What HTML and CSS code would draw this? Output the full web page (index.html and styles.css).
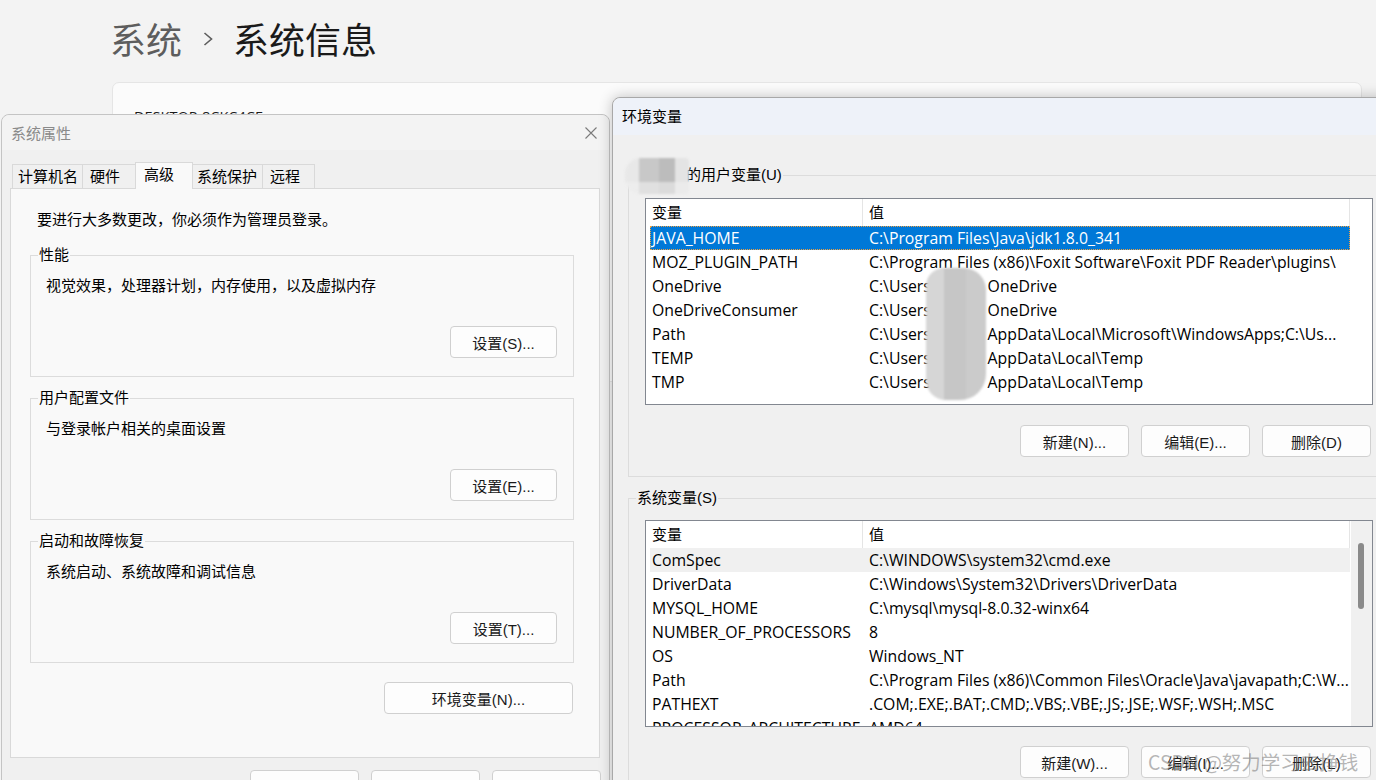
FILE: index.html
```html
<!DOCTYPE html>
<html lang="zh-CN">
<head>
<meta charset="utf-8">
<title>系统信息</title>
<link rel="stylesheet" href="styles.css">
</head>
<body>
<div class="settings">
  <h1 class="crumb"><span class="crumb-parent">系统</span><svg class="chev" viewBox="0 0 10 14" width="10" height="14"><polyline points="1.5,1 8.5,7 1.5,13" fill="none" stroke="#5d5d5d" stroke-width="1.6"/></svg><span class="crumb-current">系统信息</span></h1>
  <div class="card"><div class="device">DESKTOP-8CKC4CE</div></div>
</div>

<section class="dlg dlg-sys">
  <div class="sys-title">
    <span class="title">系统属性</span>
    <svg class="close" viewBox="0 0 12 12" width="12" height="12"><path d="M0.5 0.5 L11.5 11.5 M11.5 0.5 L0.5 11.5" stroke="#7a7a7a" stroke-width="1.1" fill="none"/></svg>
  </div>
  <div class="tabs">
    <div class="tab tab-a">计算机名</div>
    <div class="tab tab-b">硬件</div>
    <div class="tab tab-c on">高级</div>
    <div class="tab tab-d">系统保护</div>
    <div class="tab tab-e">远程</div>
  </div>
  <div class="panel">
    <p class="intro">要进行大多数更改，你必须作为管理员登录。</p>
    <div class="group">
      <div class="glabel">性能</div>
      <p class="gtext">视觉效果，处理器计划，内存使用，以及虚拟内存</p>
      <div class="gact"><button class="btn">设置(S)...</button></div>
    </div>
    <div class="group">
      <div class="glabel">用户配置文件</div>
      <p class="gtext">与登录帐户相关的桌面设置</p>
      <div class="gact"><button class="btn">设置(E)...</button></div>
    </div>
    <div class="group">
      <div class="glabel">启动和故障恢复</div>
      <p class="gtext">系统启动、系统故障和调试信息</p>
      <div class="gact"><button class="btn">设置(T)...</button></div>
    </div>
    <div class="envrow"><button class="btn btn-env">环境变量(N)...</button></div>
  </div>
  <div class="footer">
    <button class="btn btn-w">确定</button>
    <button class="btn btn-w">取消</button>
    <button class="btn btn-w">应用(A)</button>
  </div>
</section>

<section class="dlg dlg-env">
  <div class="env-title">环境变量</div>
  <div class="env-body">
    <div class="egroup">
      <div class="glabel elabel"><span class="namegap"></span>的用户变量(U)</div>
      <div class="lv">
        <div class="lv-main">
          <div class="lv-head"><div class="h1">变量</div><div class="h2">值</div><div class="hfill"></div></div>
          <div class="lv-rows">
            <div class="row sel"><div class="c1">JAVA_HOME</div><div class="c2">C:\Program Files\Java\jdk1.8.0_341</div></div>
            <div class="row"><div class="c1">MOZ_PLUGIN_PATH</div><div class="c2">C:\Program Files (x86)\Foxit Software\Foxit PDF Reader\plugins\</div></div>
            <div class="row"><div class="c1">OneDrive</div><div class="c2">C:\Users\<span class="nm"></span>OneDrive</div></div>
            <div class="row"><div class="c1">OneDriveConsumer</div><div class="c2">C:\Users\<span class="nm"></span>OneDrive</div></div>
            <div class="row"><div class="c1">Path</div><div class="c2">C:\Users\<span class="nm"></span>AppData\Local\Microsoft\WindowsApps;C:\Us...</div></div>
            <div class="row"><div class="c1">TEMP</div><div class="c2">C:\Users\<span class="nm"></span>AppData\Local\Temp</div></div>
            <div class="row"><div class="c1">TMP</div><div class="c2">C:\Users\<span class="nm"></span>AppData\Local\Temp</div></div>
          </div>
        </div>
      </div>
      <div class="ebtns">
        <button class="btn btn-e">新建(N)...</button>
        <button class="btn btn-e">编辑(E)...</button>
        <button class="btn btn-e">删除(D)</button>
      </div>
    </div>

    <div class="egroup egroup-sys">
      <div class="glabel elabel">系统变量(S)</div>
      <div class="lv lv-sys">
        <div class="lv-main">
          <div class="lv-head"><div class="h1">变量</div><div class="h2">值</div><div class="hfill"></div></div>
          <div class="lv-rows">
            <div class="row hov"><div class="c1">ComSpec</div><div class="c2">C:\WINDOWS\system32\cmd.exe</div></div>
            <div class="row"><div class="c1">DriverData</div><div class="c2">C:\Windows\System32\Drivers\DriverData</div></div>
            <div class="row"><div class="c1">MYSQL_HOME</div><div class="c2">C:\mysql\mysql-8.0.32-winx64</div></div>
            <div class="row"><div class="c1">NUMBER_OF_PROCESSORS</div><div class="c2">8</div></div>
            <div class="row"><div class="c1">OS</div><div class="c2">Windows_NT</div></div>
            <div class="row"><div class="c1">Path</div><div class="c2">C:\Program Files (x86)\Common Files\Oracle\Java\javapath;C:\W...</div></div>
            <div class="row"><div class="c1">PATHEXT</div><div class="c2">.COM;.EXE;.BAT;.CMD;.VBS;.VBE;.JS;.JSE;.WSF;.WSH;.MSC</div></div>
            <div class="row"><div class="c1">PROCESSOR_ARCHITECTURE</div><div class="c2">AMD64</div></div>
          </div>
        </div>
        <div class="vscroll"><div class="thumb"></div></div>
      </div>
      <div class="ebtns">
        <button class="btn btn-e">新建(W)...</button>
        <button class="btn btn-e">编辑(I)...</button>
        <button class="btn btn-e">删除(L)</button>
      </div>
    </div>
  </div>
  <div class="blur blur-name"></div>
  <div class="blur blur-path"></div>
</section>

<div class="wm">CSDN @努力学习去挣钱</div>
</body>
</html>
```

FILE: styles.css
```css
* { box-sizing: border-box; }
html, body { margin: 0; }
body {
  width: 1376px;
  height: 780px;
  overflow: hidden;
  position: relative;
  background: #f3f3f3;
  font-family: "Liberation Sans", "Noto Sans CJK SC", sans-serif;
  color: #1a1a1a;
}

/* settings page behind */
.settings { padding: 14px 0 0 110px; }
.crumb {
  margin: 0;
  display: flex;
  align-items: center;
  height: 48px;
  font-family: "Noto Sans CJK SC", sans-serif;
  font-weight: 400;
  font-size: 36px;
  line-height: 48px;
}
.crumb-parent { color: #5d5d5d; }
.crumb-current { color: #1a1a1a; }
.chev { margin: 2px 20px 0 21px; }
.card {
  margin: 20px 0 0 2px;
  width: 1250px;
  height: 300px;
  background: #fbfbfb;
  border: 1px solid #e5e5e5;
  border-radius: 7px;
  padding: 24px 0 0 21px;
}
.device { font-family: "Open Sans", sans-serif; font-size: 14.5px; line-height: 20px; color: #1a1a1a; }

/* dialogs */
.dlg {
  position: absolute;
  border: 1px solid #c4c4c4;
  border-radius: 8px;
  background: #f0f0f0;
}
.dlg-sys { left: 1px; top: 114px; width: 609px; height: 700px; }
.sys-title {
  height: 35px;
  display: flex;
  align-items: center;
  justify-content: space-between;
  padding: 0 12px 0 9px;
  background: #f3f3f3;
  border-radius: 8px 8px 0 0;
}
.sys-title .title { font-size: 15px; color: #8a8a8a; }

.tabs {
  display: flex;
  align-items: flex-end;
  height: 26px;
  margin: 12px 0 0 10px;
}
.tab {
  height: 24px;
  border: 1px solid #d9d9d9;
  border-bottom: 0;
  margin-right: -1px;
  background: #f0f0f0;
  font-size: 15px;
  line-height: 23px;
  padding-left: 6px;
  color: #000;
  white-space: nowrap;
}
.tab.on {
  height: 27px;
  margin-bottom: -1px;
  background: #f9f9f9;
  position: relative;
  z-index: 1;
  line-height: 24px;
  padding-left: 8px;
}
.tab-a { width: 71px; padding-left: 5px; }
.tab-b { width: 54px; padding-left: 7px; }
.tab-c { width: 58px; }
.tab-d { width: 71px; padding-left: 4px; }
.tab-e { width: 53px; padding-left: 7px; }

.panel {
  margin-left: 8px;
  width: 590px;
  height: 570px;
  border: 1px solid #d9d9d9;
  background: #f9f9f9;
  padding: 21px 25px 0 19px;
}
.intro { margin: 0 0 0 7px; font-size: 15px; line-height: 20px; color: #000; }
.group {
  border: 1px solid #dcdcdc;
  margin-top: 21px;
  padding: 0 16px 18px 0;
}
.intro + .group { margin-top: 25px; }
.glabel {
  display: table;
  margin: -11px 0 0 7px;
  padding: 0 1px;
  background: #f9f9f9;
  font-size: 15px;
  line-height: 20px;
  color: #000;
}
.gtext { margin: 11px 0 0 15px; font-size: 15px; line-height: 20px; color: #000; }
.gact { display: flex; justify-content: flex-end; margin-top: 30px; }

.btn {
  height: 32px;
  width: 107px;
  border: 1px solid #d0d0d0;
  border-radius: 4px;
  background: #fdfdfd;
  font-family: "Liberation Sans", "Noto Sans CJK SC", sans-serif;
  font-size: 15px;
  color: #1a1a1a;
  padding: 0;
}
.envrow { display: flex; justify-content: flex-end; margin-top: 19px; padding-right: 1px; }
.btn-env { width: 189px; }
.footer {
  display: flex;
  justify-content: flex-end;
  gap: 12px;
  margin-top: 12px;
  padding-right: 8px;
}
.btn-w { width: 109px; }

/* env dialog */
.dlg-env {
  left: 612px;
  top: 97px;
  width: 790px;
  height: 720px;
  border-color: #a8a8a8;
  box-shadow: 0 0 14px rgba(0, 0, 0, 0.24);
}
.env-title {
  height: 37px;
  background: #eef2f9;
  padding: 0 0 3px 9px;
  display: flex;
  align-items: center;
  font-size: 15px;
  color: #000;
  border-radius: 8px 8px 0 0;
}
.env-body { padding: 40px 0 0 15px; }
.egroup {
  width: 780px;
  border: 1px solid #dcdcdc;
  padding: 0 0 19px 16px;
}
.egroup-sys { margin-top: 21px; }
.elabel { background: #f0f0f0; margin-left: -9px; }
.namegap { display: inline-block; width: 49px; }

.lv {
  width: 728px;
  height: 207px;
  margin-top: 13px;
  border: 1px solid #828790;
  background: #fff;
  display: flex;
  font-family: "Open Sans", "Noto Sans CJK SC", sans-serif;
  font-size: 15.8px;
  color: #000;
}
.lv-sys { margin-top: 12px; }
.lv-main { flex: 1; min-width: 0; overflow: hidden; }
.lv-head { display: flex; height: 27px; line-height: 27px; font-size: 15px; }
.h1 { width: 217px; border-right: 1px solid #e5e5e5; padding-left: 6px; }
.h2 { width: 487px; border-right: 1px solid #e5e5e5; padding-left: 6px; }
.hfill { flex: 1; }
.lv-rows { padding-left: 4px; }
.row { display: flex; width: 700px; height: 24px; line-height: 24px; white-space: nowrap; }
.c1 { width: 217px; padding-left: 2px; flex: none; overflow: hidden; }
.c2 { flex: 1; min-width: 0; padding-left: 2px; overflow: hidden; }
.nm { display: inline-block; width: 51px; }
.row.sel { background: #0078d7; color: #fff; outline: 1px dotted #f0a040; outline-offset: -1px; }
.row.hov { background: #f0f0f0; }
.vscroll { width: 21px; flex: none; background: #f0f0f0; padding: 22px 0 0 7px; }
.thumb { width: 6px; height: 66px; background: #8a8a8a; border-radius: 3px; }

.ebtns {
  display: flex;
  justify-content: flex-end;
  gap: 12px;
  width: 728px;
  padding-right: 2px;
  margin-top: 20px;
}
.btn-e { width: 109px; }
.egroup-sys .ebtns { margin-top: 19px; }

/* privacy blur overlays */
.blur { position: absolute; filter: blur(1.2px); }
.blur-name {
  left: 12px;
  top: 60px;
  width: 64px;
  height: 36px;
  border-radius: 16px 4px 4px 16px;
  background:
    linear-gradient(180deg, rgba(255,255,255,0) 0 24px, rgba(240,240,240,0.6) 24px),
    linear-gradient(90deg, #e8e8e8 0 14px, #c8c8c8 14px 34px, #bcbcbc 34px 50px, #e4e4e4 50px);
}
.blur-path {
  left: 313px;
  top: 170px;
  width: 60px;
  height: 132px;
  border-radius: 18px 22px 26px 20px;
  background:
    linear-gradient(90deg, #d6d6d6 0 18px, #c6c6c6 18px 40px, #cbcbcb 40px 60px);
}

.wm {
  position: absolute;
  left: 1148px;
  top: 749px;
  font-family: "Noto Sans CJK SC", sans-serif;
  font-size: 19.5px;
  line-height: 26px;
  color: rgba(110, 110, 110, 0.5);
  white-space: nowrap;
}
```
